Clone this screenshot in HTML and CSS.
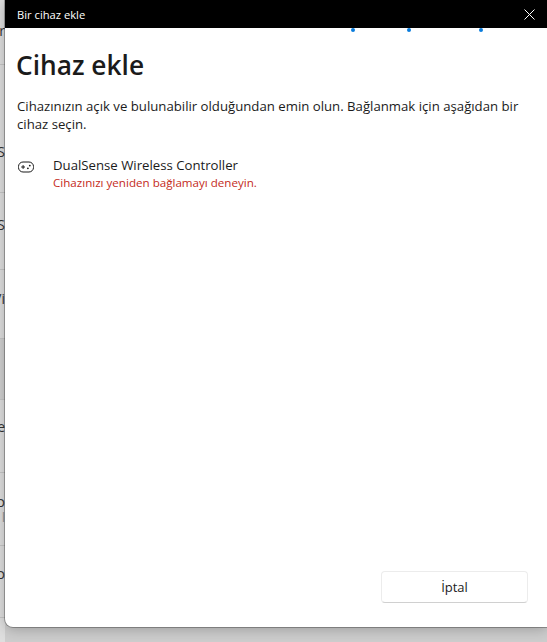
FILE: index.html
```html
<!DOCTYPE html>
<html lang="tr">
<head>
    <meta charset="UTF-8">
    <meta name="viewport" content="width=device-width, initial-scale=1.0">
    <title>Bir cihaz ekle</title>
    <link rel="stylesheet" href="styles.css">
</head>
<body>
    <div class="backdrop">
        <div class="strip-row strip-top"><span class="strip-label">or</span></div>
        <div class="strip-row strip-s1"><span class="strip-label">S</span></div>
        <div class="strip-row strip-s2"><span class="strip-label">S</span></div>
        <div class="strip-row strip-vi"><span class="strip-label">Vi</span></div>
        <div class="strip-row strip-blank"></div>
        <div class="strip-row strip-e"><span class="strip-label">e</span></div>
        <div class="strip-row strip-o1"><span class="strip-label">o</span><span class="strip-sub">l</span></div>
        <div class="strip-row strip-o2"><span class="strip-label">o</span></div>
    </div>

    <div class="dialog">
        <div class="titlebar">
            <span class="titlebar-text">Bir cihaz ekle</span>
            <svg class="close-icon" width="11" height="11" viewBox="0 0 11 11">
                <path d="M0.5 0.5L10.5 10.5M10.5 0.5L0.5 10.5" stroke="#fff" stroke-width="1" fill="none"/>
            </svg>
        </div>
        <div class="progress-dots">
            <span class="dot"></span>
            <span class="dot"></span>
            <span class="dot"></span>
        </div>
        <div class="content">
            <h1>Cihaz ekle</h1>
            <p class="intro">Cihazınızın açık ve bulunabilir olduğundan emin olun. Bağlanmak için aşağıdan bir cihaz seçin.</p>
            <div class="device">
                <svg class="device-icon" width="16" height="12" viewBox="0 0 16 12">
                    <rect x="0.5" y="1" width="15" height="10" rx="4.5" fill="none" stroke="#1b1b1b" stroke-width="1"/>
                    <path d="M3.2 6H7M5.1 4.1V7.9" stroke="#1b1b1b" stroke-width="1" fill="none"/>
                    <circle cx="11.8" cy="4.6" r="0.9" fill="#1b1b1b"/>
                    <circle cx="9.9" cy="7.3" r="0.9" fill="#1b1b1b"/>
                </svg>
                <div class="device-text">
                    <div class="device-name">DualSense Wireless Controller</div>
                    <div class="device-error">Cihazınızı yeniden bağlamayı deneyin.</div>
                </div>
            </div>
        </div>
        <div class="footer">
            <button class="cancel-btn">İptal</button>
        </div>
    </div>
</body>
</html>
```

FILE: styles.css
```css
html, body {
    margin: 0;
    height: 100%;
}
body {
    width: 547px;
    height: 642px;
    overflow: hidden;
    display: flex;
    font-family: "Open Sans", "Noto Sans", Arial, sans-serif;
    background-color: #cdcdcd;
    color: #1b1b1b;
}
.backdrop {
    width: 5px;
    flex-shrink: 0;
    overflow: hidden;
    background-color: #dedede;
}
.strip-row {
    box-sizing: border-box;
    width: 5px;
    border-bottom: 1px solid #c6c6c6;
    overflow: hidden;
    display: flex;
    flex-direction: column;
    align-items: flex-end;
    font-size: 14px;
    line-height: 16px;
    color: #333;
}
.strip-label {
    display: block;
    white-space: nowrap;
}
.strip-sub {
    display: block;
    color: #8f8f8f;
    font-size: 12px;
}
.strip-top { height: 65px; padding-top: 23px; }
.strip-s1 { height: 128px; padding-top: 79px; }
.strip-s2 { height: 77px; padding-top: 24px; }
.strip-vi { height: 69px; padding-top: 21px; }
.strip-blank { height: 61px; background-color: #d0d0d0; }
.strip-e { height: 73px; padding-top: 19px; }
.strip-o1 { height: 73px; padding-top: 21px; }
.strip-o2 { height: 72px; padding-top: 20px; }

.dialog {
    flex: 1;
    height: 627px;
    position: relative;
    display: flex;
    flex-direction: column;
    background: #fff;
    border-bottom-left-radius: 8px;
    box-shadow: 0 0 0 1px rgba(0,0,0,0.28), 0 2px 14px rgba(0,0,0,0.25);
}
.titlebar {
    height: 28px;
    flex-shrink: 0;
    background: #000;
    color: #fff;
    display: flex;
    align-items: center;
    justify-content: space-between;
    padding: 0 12px 0 12px;
    font-size: 11.2px;
}
.progress-dots {
    height: 4px;
    position: relative;
}
.dot {
    position: absolute;
    top: 0;
    width: 4px;
    height: 4px;
    border-radius: 50%;
    background: #0a7cdc;
}
.dot:nth-child(1) { left: 346px; }
.dot:nth-child(2) { left: 402px; }
.dot:nth-child(3) { left: 474px; }
.content {
    flex: 1;
    padding: 14px 12px 0 12px;
}
h1 {
    margin: 0 0 0 -1px;
    font-size: 26.3px;
    line-height: 38px;
    font-weight: 600;
}
.intro {
    margin: 13px 0 0 0;
    font-size: 13.2px;
    line-height: 18px;
    width: 515px;
}
.device {
    display: flex;
    margin-top: 22px;
}
.device-icon {
    margin: 6px 19px 0 1px;
}
.device-name {
    font-size: 13.2px;
    line-height: 20px;
}
.device-error {
    font-size: 11.6px;
    line-height: 16px;
    color: #c42b1c;
}
.footer {
    display: flex;
    justify-content: flex-end;
    padding: 0 19px 24px 0;
}
.cancel-btn {
    width: 147px;
    height: 32px;
    box-sizing: border-box;
    background: #fff;
    border: 1px solid #ececec;
    border-bottom-color: #d0d0d0;
    border-radius: 4px;
    font-family: inherit;
    font-size: 13px;
    color: #1b1b1b;
}
```
